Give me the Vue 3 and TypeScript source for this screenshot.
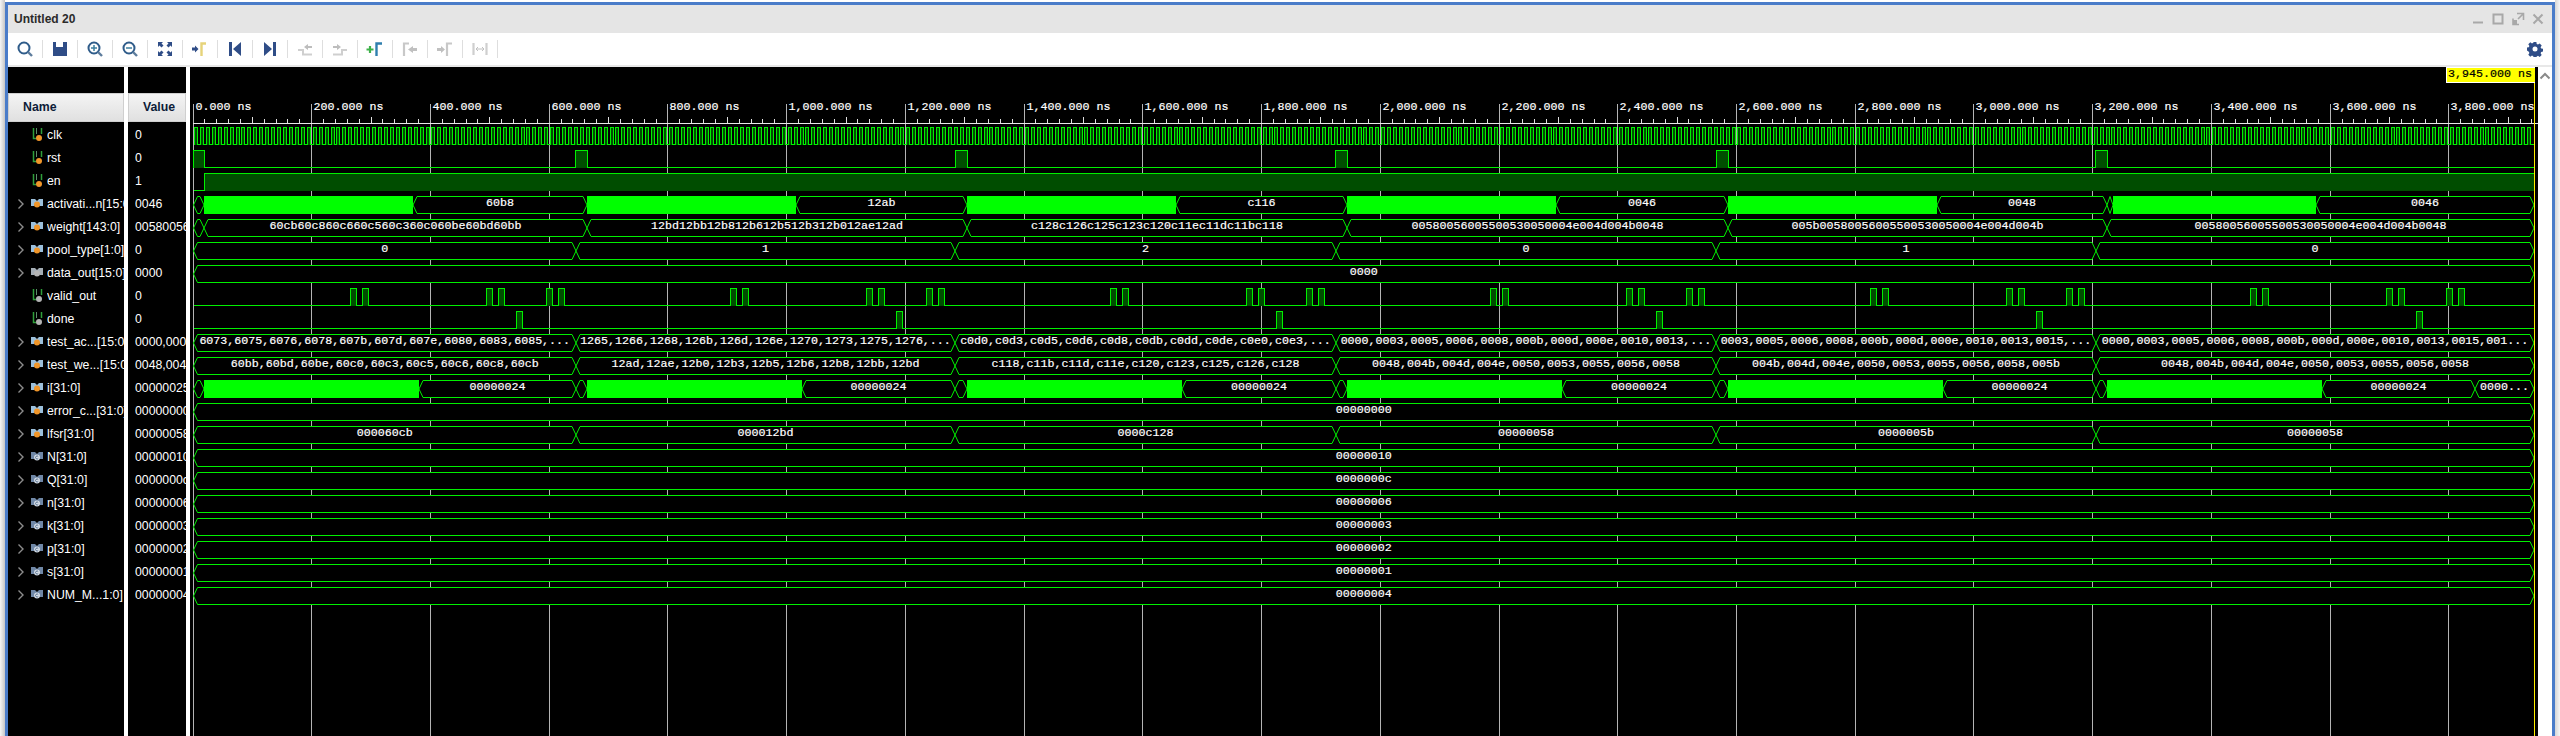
<template>
  <div class="page">
    <div class="window">
      <div class="titlebar">
        <span class="title">Untitled 20</span>
        <div class="win-btns">
          <svg width="14" height="14" viewBox="0 0 14 14"><path d="M2 10.500h10" stroke="#a8a8a8" stroke-width="2" /></svg>
          <svg width="14" height="14" viewBox="0 0 14 14"><rect x="2.500" y="2.500" width="9" height="9" fill="none" stroke="#a8a8a8" stroke-width="2" /></svg>
          <svg width="14" height="14" viewBox="0 0 14 14"><path d="M6 1.500h6.500V8M12 2L7 7M2 6.500v6h6" fill="none" stroke="#a8a8a8" stroke-width="1.600" /><rect x="2" y="8" width="4" height="4" fill="#a8a8a8" /></svg>
          <svg width="14" height="14" viewBox="0 0 14 14"><path d="M2.500 2.500l9 9M11.500 2.500l-9 9" stroke="#a8a8a8" stroke-width="2" /></svg>
        </div>
      </div>

      <div class="toolbar">
        <div class="tool">
          <svg width="20" height="20" viewBox="0 0 20 20"><circle cx="9" cy="9" r="5.500" fill="none" stroke="#2f5c8a" stroke-width="2" /><path d="M13 13l4 4" stroke="#5d7c9c" stroke-width="2.400" /></svg>
        </div>
        <div class="tool">
          <svg width="20" height="20" viewBox="0 0 20 20"><path d="M3 3h3v5h7V3h1v0h3v14H3z" fill="#2f4d87" /></svg>
        </div>
        <div class="tool">
          <svg width="20" height="20" viewBox="0 0 20 20"><circle cx="9" cy="9" r="5.500" fill="none" stroke="#2f5c8a" stroke-width="2" /><path d="M13 13l4 4" stroke="#5d7c9c" stroke-width="2.400" /><path d="M6 9h6M9 6v6" stroke="#3d7f9f" stroke-width="1.500" /></svg>
        </div>
        <div class="tool">
          <svg width="20" height="20" viewBox="0 0 20 20"><circle cx="9" cy="9" r="5.500" fill="none" stroke="#2f5c8a" stroke-width="2" /><path d="M13 13l4 4" stroke="#5d7c9c" stroke-width="2.400" /><path d="M6 9h6" stroke="#3d7f9f" stroke-width="1.500" /></svg>
        </div>
        <div class="tool">
          <svg width="20" height="20" viewBox="0 0 20 20"><path d="M3 3h5L6.500 4.500 8.500 6.500 6.500 8.500 4.500 6.500 3 8zM17 3v5L15.500 6.500 13.500 8.500 11.500 6.500 13.500 4.500 12 3zM3 17v-5l1.500 1.500 2-2 2 2-2 2L8 17zM17 17h-5l1.500-1.500-2-2 2-2 2 2L17 12z" fill="#2f4d87" /></svg>
        </div>
        <div class="tool">
          <svg width="20" height="20" viewBox="0 0 20 20"><path d="M2 8.500h3V6.500l3.500 3.500L5 13.500v-2H2z" fill="#2f4d87" /><path d="M11.500 17V4.500H16" fill="none" stroke="#e6d37a" stroke-width="2.400" /></svg>
        </div>
        <div class="tool">
          <svg width="20" height="20" viewBox="0 0 20 20"><path d="M4 3h3v14H4zM16 3v14l-8-7z" fill="#2f4d87" /></svg>
        </div>
        <div class="tool">
          <svg width="20" height="20" viewBox="0 0 20 20"><path d="M16 3h-3v14h3zM4 3v14l8-7z" fill="#2f4d87" /></svg>
        </div>
        <div class="tool">
          <svg width="20" height="20" viewBox="0 0 20 20"><path d="M3 11h5v4.500h9M8 15.500V11" fill="none" stroke="#cfcfcf" stroke-width="2" /><path d="M17 7h-4V5L9 8l4 3V9h4z" fill="#bdbdbd" /></svg>
        </div>
        <div class="tool">
          <svg width="20" height="20" viewBox="0 0 20 20"><path d="M17 11h-5v4.500H3" fill="none" stroke="#cfcfcf" stroke-width="2" /><path d="M3 7h4V5l4 3-4 3V9H3z" fill="#bdbdbd" /></svg>
        </div>
        <div class="tool">
          <svg width="20" height="20" viewBox="0 0 20 20"><path d="M1.500 10.500h7M5 7v7" stroke="#3fb24a" stroke-width="2.200" /><path d="M11.500 17V4.500H17" fill="none" stroke="#2f7fae" stroke-width="2.400" /></svg>
        </div>
        <div class="tool">
          <svg width="20" height="20" viewBox="0 0 20 20"><path d="M4 17V4.500H9" fill="none" stroke="#c8c8c8" stroke-width="2.200" /><path d="M17 9h-4V7l-5 3.500L13 14v-2h4z" fill="#c0c0c0" /></svg>
        </div>
        <div class="tool">
          <svg width="20" height="20" viewBox="0 0 20 20"><path d="M2 9h4V7l4 3.500L6 14v-2H2z" fill="#c0c0c0" /><path d="M12 17V4.500H17" fill="none" stroke="#c8c8c8" stroke-width="2.200" /></svg>
        </div>
        <div class="tool">
          <svg width="20" height="20" viewBox="0 0 20 20"><path d="M3.500 4v12M16.500 4v12" stroke="#cfcfcf" stroke-width="2.200" /><path d="M6 10h8M6 10l2-2M6 10l2 2M14 10l-2-2M14 10l-2 2" fill="none" stroke="#c0c0c0" /></svg>
        </div>
        <div class="gear">
          <svg width="16" height="16" viewBox="0 0 16 16">
            <path d="M6.600 1h2.800l.3 2 1.300.6 1.700-1.100 2 2-1.100 1.700.6 1.300 1.800.3v2.800l-1.800.3-.6 1.300 1.100 1.700-2 2-1.700-1.100-1.300.6-.3 1.600H6.600l-.3-1.800-1.300-.6-1.700 1.100-2-2 1.100-1.700-.6-1.300L0 9.400V6.600l1.800-.3.6-1.300-1.100-1.700 2-2L5 2.400l1.300-.6z" fill="#2f4d87" />
            <circle cx="8" cy="8" r="2.500" fill="#fff" />
          </svg>
        </div>
      </div>

      <div class="body">
        <div class="col names">
          <div class="head head-name">Name</div>
          <div v-for="s in signals" :key="s.name" class="row">
            <svg v-if="s.kind === 'bus'" class="chev" width="8" height="12" viewBox="0 0 8 12"><path d="M1.500 1.500L6 6l-4.500 4.500" fill="none" stroke="#8c8c8c" stroke-width="1.400" /></svg>
            <span v-else class="chev"></span>
            <svg class="sig-icon" width="12" height="14" viewBox="0 0 12 14">
              <template v-if="s.kind === 'bit'">
                <path d="M2.500 0v10.500H5M10.500 0v6" fill="none" stroke="#2f9e3a" stroke-width="1.500" />
                <path d="M5.500 0v6" stroke="#5c8f68" />
                <circle cx="8" cy="10" r="3" :fill="dotColor(s.dot)" />
              </template>
              <template v-else>
                <path d="M0 2h4l2 2 2-2h4v7H9L6 6 3 9H0z" :fill="busColor(s.dot)" />
                <circle cx="6" cy="7.500" r="3" :fill="dotColor(s.dot)" />
                <path v-if="s.dot === 'const'" d="M7.200 6.500a1.500 1.500 0 1 0 0 2" fill="none" stroke="#55708f" />
              </template>
            </svg>
            <span class="label">{{ s.name }}</span>
          </div>
        </div>

        <div class="col values">
          <div class="head head-value">Value</div>
          <div v-for="s in signals" :key="s.name" class="row value"><span class="label">{{ s.value }}</span></div>
        </div>

        <svg class="wave" width="2348" height="669" viewBox="190 67 2348 669">
          <!-- grid and ruler -->
          <path :d="gridPath" fill="none" stroke="#b4b4b4" shape-rendering="crispEdges" />
          <path d="M193 123.500H2538" stroke="#e8e8e8" shape-rendering="crispEdges" />
          <path :d="tickPath" fill="none" stroke="#e0e0e0" shape-rendering="crispEdges" />
          <text v-for="l in rulerLabels" :key="l.text" :x="l.x" y="110" class="wtext">{{ l.text }}</text>

          <!-- one-bit signals -->
          <path v-for="(d, i) in bitPaths" :key="i" :d="d" fill="#004d00" stroke="#00f000" shape-rendering="crispEdges" />

          <!-- buses -->
          <path v-for="(d, i) in busPaths" :key="'b' + i" :d="d" fill="#000" stroke="#00f000" />
          <rect v-for="(r, i) in busSolids" :key="'s' + i" :x="r.x" :y="r.y" :width="r.w" height="18" fill="#00ff00" />
          <text v-for="(t, i) in busLabels" :key="'t' + i" :x="t.x" :y="t.y" class="wtext" text-anchor="middle">{{ t.text }}</text>

          <!-- cursor -->
          <path d="M2534.500 83V736" stroke="#ffee00" shape-rendering="crispEdges" />
          <rect x="2446" y="67" width="89" height="16" fill="#fff" />
          <rect x="2447" y="68" width="88" height="14" fill="#ffff00" />
          <text x="2448" y="77" class="wtext cursor-text">3,945.000 ns</text>
        </svg>

        <div class="scroll">
          <svg width="12" height="8" viewBox="0 0 12 8"><path d="M1.500 6.500L6 2l4.500 4.500" fill="none" stroke="#8a8a8a" stroke-width="2" /></svg>
        </div>
      </div>
    </div>
  </div>
</template>

<script setup lang="ts">
type Dot = 'orange' | 'gray' | 'const'

interface Signal {
  name: string
  value: string
  kind: 'bit' | 'bus'
  dot: Dot
}

// 总线分段: [起点x, 终点x, 文本]，文本为 SOLID 时画成实心绿块
type Seg = [number, number, string]

const SOLID = '#'
const X0 = 193
const PX_PER_NS = 0.59365
const END = 2534
const ROW_TOP = 127
const ROW_STEP = 23

const signals: Signal[] = [
  { name: 'clk', value: '0', kind: 'bit', dot: 'orange' },
  { name: 'rst', value: '0', kind: 'bit', dot: 'orange' },
  { name: 'en', value: '1', kind: 'bit', dot: 'orange' },
  { name: 'activati...n[15:0]', value: '0046', kind: 'bus', dot: 'orange' },
  { name: 'weight[143:0]', value: '00580056005500530050004e004d004b0048', kind: 'bus', dot: 'orange' },
  { name: 'pool_type[1:0]', value: '0', kind: 'bus', dot: 'orange' },
  { name: 'data_out[15:0]', value: '0000', kind: 'bus', dot: 'gray' },
  { name: 'valid_out', value: '0', kind: 'bit', dot: 'gray' },
  { name: 'done', value: '0', kind: 'bit', dot: 'gray' },
  { name: 'test_ac...[15:0]', value: '0000,0003,0005', kind: 'bus', dot: 'orange' },
  { name: 'test_we...[15:0]', value: '0048,004b,004d', kind: 'bus', dot: 'orange' },
  { name: 'i[31:0]', value: '00000025', kind: 'bus', dot: 'orange' },
  { name: 'error_c...[31:0]', value: '00000000', kind: 'bus', dot: 'orange' },
  { name: 'lfsr[31:0]', value: '00000058', kind: 'bus', dot: 'orange' },
  { name: 'N[31:0]', value: '00000010', kind: 'bus', dot: 'const' },
  { name: 'Q[31:0]', value: '0000000c', kind: 'bus', dot: 'const' },
  { name: 'n[31:0]', value: '00000006', kind: 'bus', dot: 'const' },
  { name: 'k[31:0]', value: '00000003', kind: 'bus', dot: 'const' },
  { name: 'p[31:0]', value: '00000002', kind: 'bus', dot: 'const' },
  { name: 's[31:0]', value: '00000001', kind: 'bus', dot: 'const' },
  { name: 'NUM_M...1:0]', value: '00000004', kind: 'bus', dot: 'const' },
]

function dotColor(d: Dot) {
  if (d === 'orange') return '#f0962a'
  if (d === 'gray') return '#b4b4b4'
  return '#d5dde6'
}

function busColor(d: Dot) {
  if (d === 'orange') return '#9cc0dc'
  if (d === 'gray') return '#a4adb5'
  return '#6f87a6'
}

function crisp(x: number) {
  return Math.floor(x) + 0.5
}

function timeX(ns: number) {
  return crisp(X0 + ns * PX_PER_NS)
}

/* ---------- 标尺 ---------- */
const rulerLabels: { x: number; text: string }[] = []
let gridPath = ''
let tickPath = ''
for (let ns = 0; ns <= 3800; ns += 200) {
  const x = timeX(ns)
  gridPath += `M${x} 104V736`
  const head = Math.floor(ns / 1000)
  const rest = String(ns % 1000).padStart(3, '0')
  const text = head > 0 ? `${head},${rest}.000 ns` : `${ns}.000 ns`
  rulerLabels.push({ x: x + 2, text })
}
for (let ns = 20; ns < 3945; ns += 20) {
  if (ns % 200 === 0) continue
  const x = timeX(ns)
  tickPath += `M${x} ${ns % 100 === 0 ? 117 : 119}V123`
}

/* ---------- 单比特信号 ---------- */
function pulsePath(row: number, pulses: [number, number][]) {
  const top = ROW_TOP + ROW_STEP * row + 0.5
  const bot = top + 17
  let d = `M${crisp(X0)} ${bot}`
  for (const [a, b] of pulses) {
    d += `H${crisp(a)}V${top}H${crisp(b)}V${bot}`
  }
  return d + `H${END + 0.5}`
}

// 时钟高电平固定 3px，避免取整后宽度忽大忽小
const clkPulses: [number, number][] = []
for (let ns = 0; ns < 3940; ns += 10) {
  const a = Math.floor(X0 + 1.5 + ns * PX_PER_NS)
  clkPulses.push([a, a + 3])
}

const repeatBy = (base: number[], width: number, times: number) => {
  const out: [number, number][] = []
  for (let i = 0; i < times; i++) {
    for (const x of base) out.push([x + i * 380, x + i * 380 + width])
  }
  return out
}

const bitPaths = [
  pulsePath(0, clkPulses),
  pulsePath(1, [
    [193.5, 204],
    [575, 587],
    [955, 967],
    [1335, 1347],
    [1716, 1728],
    [2095, 2107],
  ]),
  pulsePath(2, [[204, END]]),
  pulsePath(7, repeatBy([350, 362, 486, 498, 546, 558], 6, 6)),
  pulsePath(8, repeatBy([516], 6, 6)),
]

/* ---------- 总线 ---------- */
const B = [576, 955, 1336, 1716, 2096]

function splitBy(texts: string[]): Seg[] {
  const edges = [193.5, ...B, END]
  return texts.map((t, i): Seg => [edges[i], edges[i + 1], t])
}

function whole(text: string): Seg[] {
  return [[193.5, END, text]]
}

const busRows: [number, Seg[]][] = [
  [3, [
    [193.5, 204, ''], [204, 413, SOLID], [413, 587, '60b8'], [587, 796, SOLID],
    [796, 967, '12ab'], [967, 1176, SOLID], [1176, 1347, 'c116'], [1347, 1556, SOLID],
    [1556, 1728, '0046'], [1728, 1937, SOLID], [1937, 2107, '0048'], [2107, 2113, ''],
    [2113, 2316, SOLID], [2316, END, '0046'],
  ]],
  [4, [
    [193.5, 204, ''],
    [204, 587, '60cb60c860c660c560c360c060be60bd60bb'],
    [587, 967, '12bd12bb12b812b612b512b312b012ae12ad'],
    [967, 1347, 'c128c126c125c123c120c11ec11dc11bc118'],
    [1347, 1728, '00580056005500530050004e004d004b0048'],
    [1728, 2107, '005b00580056005500530050004e004d004b'],
    [2107, END, '00580056005500530050004e004d004b0048'],
  ]],
  [5, splitBy(['0', '1', '2', '0', '1', '0'])],
  [6, whole('0000')],
  [9, splitBy([
    '6073,6075,6076,6078,607b,607d,607e,6080,6083,6085,...',
    '1265,1266,1268,126b,126d,126e,1270,1273,1275,1276,...',
    'c0d0,c0d3,c0d5,c0d6,c0d8,c0db,c0dd,c0de,c0e0,c0e3,...',
    '0000,0003,0005,0006,0008,000b,000d,000e,0010,0013,...',
    '0003,0005,0006,0008,000b,000d,000e,0010,0013,0015,...',
    '0000,0003,0005,0006,0008,000b,000d,000e,0010,0013,0015,001...',
  ])],
  [10, splitBy([
    '60bb,60bd,60be,60c0,60c3,60c5,60c6,60c8,60cb',
    '12ad,12ae,12b0,12b3,12b5,12b6,12b8,12bb,12bd',
    'c118,c11b,c11d,c11e,c120,c123,c125,c126,c128',
    '0048,004b,004d,004e,0050,0053,0055,0056,0058',
    '004b,004d,004e,0050,0053,0055,0056,0058,005b',
    '0048,004b,004d,004e,0050,0053,0055,0056,0058',
  ])],
  [11, [
    [193.5, 204, ''], [204, 419, SOLID], [419, 576, '00000024'], [576, 587, ''],
    [587, 802, SOLID], [802, 955, '00000024'], [955, 967, ''], [967, 1182, SOLID],
    [1182, 1336, '00000024'], [1336, 1347, ''], [1347, 1562, SOLID], [1562, 1716, '00000024'],
    [1716, 1728, ''], [1728, 1943, SOLID], [1943, 2096, '00000024'], [2096, 2107, ''],
    [2107, 2322, SOLID], [2322, 2475, '00000024'], [2475, END, '0000...'],
  ]],
  [12, whole('00000000')],
  [13, splitBy(['000060cb', '000012bd', '0000c128', '00000058', '0000005b', '00000058'])],
  [14, whole('00000010')],
  [15, whole('0000000c')],
  [16, whole('00000006')],
  [17, whole('00000003')],
  [18, whole('00000002')],
  [19, whole('00000001')],
  [20, whole('00000004')],
]

const SLANT = 4
const busPaths: string[] = []
const busSolids: { x: number; y: number; w: number }[] = []
const busLabels: { x: number; y: number; text: string }[] = []

for (const [row, segs] of busRows) {
  const top = ROW_TOP + ROW_STEP * row
  const t = top + 0.5
  const b = top + 17.5
  const m = top + 9
  for (const [x1, x2, text] of segs) {
    if (text === SOLID) {
      busSolids.push({ x: x1, y: top, w: x2 - x1 })
      continue
    }
    const s = Math.min(SLANT, (x2 - x1) / 2)
    busPaths.push(`M${x1} ${m}L${x1 + s} ${t}H${x2 - s}L${x2} ${m}L${x2 - s} ${b}H${x1 + s}Z`)
    if (text) busLabels.push({ x: (x1 + x2) / 2, y: top + 10, text })
  }
}
</script>

<style scoped>
.page {
  width: 2560px;
  height: 736px;
  background:
    linear-gradient(to right, #f6f6f6 0, #c6c6c6 5px, transparent 5px),
    linear-gradient(to left, #f6f6f6 0, #d6d6d6 5px, transparent 5px),
    #fff;
  padding: 2px 5px 0;
  box-sizing: border-box;
  overflow: hidden;
  font-family: "Liberation Sans", Arial, sans-serif;
}

.window {
  height: 734px;
  box-sizing: border-box;
  border: 3px solid #4a7cc9;
  border-bottom: none;
  display: flex;
  flex-direction: column;
}

.titlebar {
  height: 28px;
  flex: none;
  background: #e5e5e5;
  display: flex;
  align-items: center;
  padding: 0 7px 0 6px;
}

.title {
  font-size: 12px;
  font-weight: 700;
  color: #2b2b2b;
}

.win-btns {
  margin-left: auto;
  display: flex;
  gap: 6px;
}

.toolbar {
  height: 34px;
  flex: none;
  box-sizing: border-box;
  background: #fff;
  border-bottom: 2px solid #e8e8e8;
  display: flex;
  align-items: center;
}

.tool {
  width: 35px;
  height: 18px;
  box-sizing: border-box;
  padding-right: 1px;
  border-right: 1px solid #dedede;
  display: flex;
  align-items: center;
  justify-content: center;
}

.gear {
  margin-left: auto;
  padding-right: 9px;
  display: flex;
}

.body {
  flex: 1;
  min-height: 0;
  display: flex;
  background: #fff;
}

.col {
  flex: none;
  background: #000;
  padding-top: 26px;
  overflow: hidden;
}

.names {
  width: 116px;
  margin-right: 4px;
}

.values {
  width: 58px;
  margin-right: 4px;
}

.head {
  height: 29px;
  margin-bottom: 1px;
  box-sizing: border-box;
  background: linear-gradient(#f4f4f4, #e0e0e0);
  border: 1px solid #cfcfcf;
  font-size: 12.3px;
  font-weight: 700;
  line-height: 27px;
  color: #0d1c38;
}

.head-name {
  padding-left: 14px;
}

.head-value {
  padding-left: 14px;
}

.row {
  height: 23px;
  display: flex;
  align-items: center;
  padding-left: 9px;
  font-size: 12.3px;
  color: #fff;
  white-space: nowrap;
  overflow: hidden;
}

.label {
  flex: 1;
  min-width: 0;
  overflow: hidden;
}

.chev {
  flex: none;
  width: 8px;
  margin-right: 6px;
}

.sig-icon {
  flex: none;
  margin-right: 4px;
}

.value {
  padding-left: 7px;
}

.wave {
  display: block;
  flex: none;
  background: #000;
}

.wtext {
  font-family: "Liberation Mono", "Courier New", monospace;
  font-size: 11.67px;
  fill: #fff;
  stroke: #fff;
  stroke-width: 0.2px;
}

.cursor-text {
  fill: #000;
  stroke: #000;
}

.scroll {
  flex: 1;
  background: #fff;
  display: flex;
  justify-content: center;
  padding-top: 5px;
  box-sizing: border-box;
}

.scroll svg {
  display: block;
}
</style>

<style>
html,
body {
  margin: 0;
  background: #fff;
}
</style>
